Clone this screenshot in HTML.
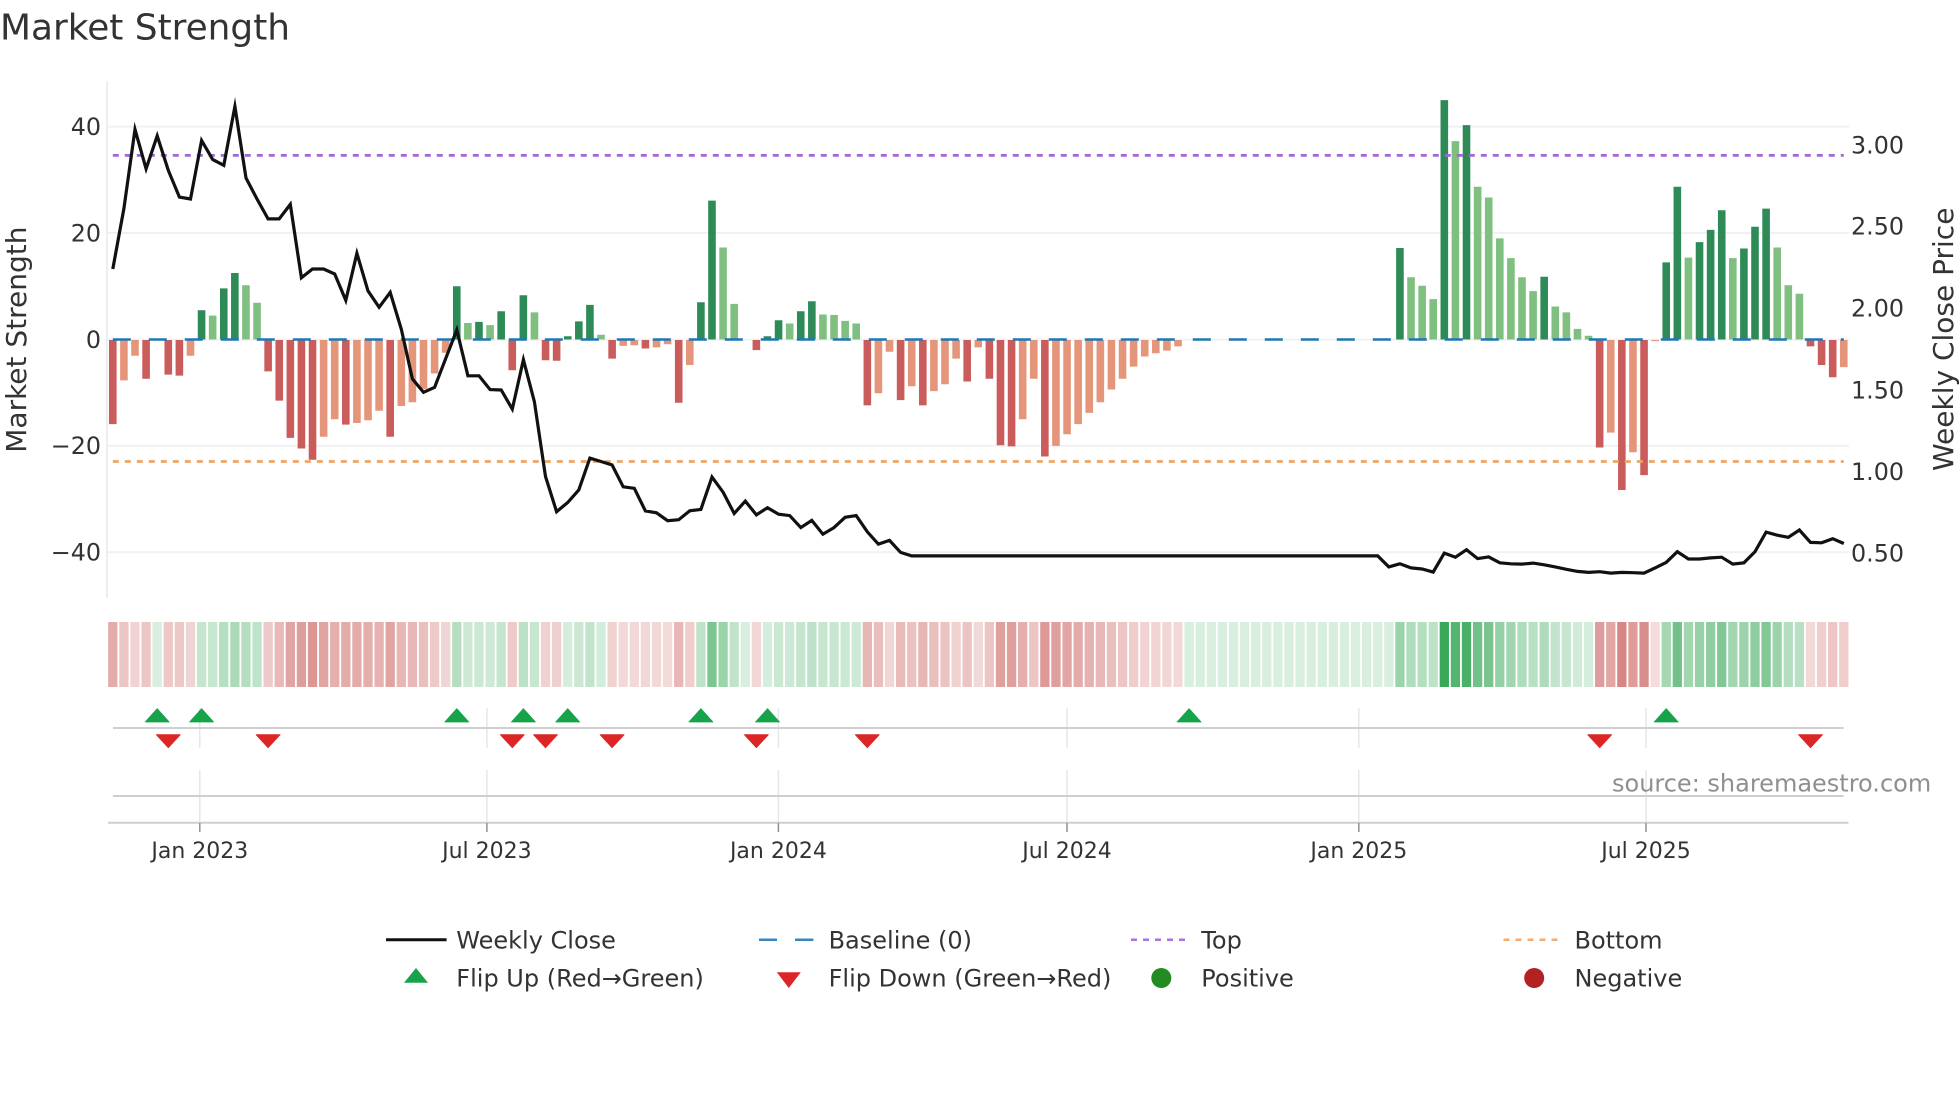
<!DOCTYPE html>
<html><head><meta charset="utf-8"><title>Market Strength</title>
<style>
html,body{margin:0;padding:0;background:#fff;width:1960px;height:1102px;overflow:hidden}
svg{display:block}
text{font-family:"DejaVu Sans","Liberation Sans",sans-serif;fill:#333}
.t{font-size:22px}
.a{font-size:23.8px}
.l{font-size:24px}
</style></head><body>
<svg id="s" xmlns="http://www.w3.org/2000/svg" width="1960" height="1102" viewBox="0 0 1960 1102">
<rect width="1960" height="1102" fill="#fff"/>
<g id="heat"></g>
<g stroke="#f0f1f5" stroke-width="2" fill="none">
<path d="M108 126.6H1849M108 233H1849M108 339.6H1849M108 445.8H1849M108 552.2H1849"/>
</g>
<path d="M107 81V598" stroke="#eeeeee" stroke-width="2"/>
<g stroke="#e6e6ea" stroke-width="1.5" fill="none">
<path d="M199.8 708V748M199.8 770V823M486.9 708V748M486.9 770V823M778.4 708V748M778.4 770V823M1067 708V748M1067 770V823M1358.8 708V748M1358.8 770V823M1646 708V748M1646 770V823"/>
</g>
<g id="bars"></g>
<path d="M112.8 339.5H1843.8" stroke="#1f77b4" stroke-width="2.6" stroke-dasharray="18 18" fill="none"/>
<path d="M112.8 155.4H1843.8" stroke="#a366d9" stroke-width="2.7" stroke-dasharray="6 6" fill="none"/>
<path d="M112.8 461.5H1843.8" stroke="#eea666" stroke-width="2.7" stroke-dasharray="6 6" fill="none"/>
<path id="price" d="" stroke="#111" stroke-width="3.2" fill="none" stroke-linejoin="miter" stroke-miterlimit="8"/>
<path d="M113 728H1843.6M113 796H1843.6M108 822.7H1848.5" stroke="#cfcfd2" stroke-width="2" fill="none"/>
<path d="M199.8 823V832M486.9 823V832M778.4 823V832M1067 823V832M1358.8 823V832M1646 823V832" stroke="#909090" stroke-width="1.5" fill="none"/>
<g id="mk"></g>

<text x="0" y="39.4" style="font-size:35.9px">Market Strength</text>
<g class="a" text-anchor="end">
<text x="101" y="135">40</text><text x="101" y="241.5">20</text><text x="101" y="348">0</text>
<text x="101" y="454">−20</text><text x="101" y="560.5">−40</text>
</g>
<g class="a">
<text x="1851" y="153.5">3.00</text><text x="1851" y="234.5">2.50</text><text x="1851" y="316.5">2.00</text>
<text x="1851" y="398.5">1.50</text><text x="1851" y="480">1.00</text><text x="1851" y="561.5">0.50</text>
</g>
<text transform="translate(26 339.6) rotate(-90)" text-anchor="middle" style="font-size:28px">Market Strength</text>
<text transform="translate(1953 339.3) rotate(-90)" text-anchor="middle" style="font-size:28px">Weekly Close Price</text>
<g class="t" text-anchor="middle">
<text x="199.8" y="858">Jan 2023</text><text x="486.9" y="858">Jul 2023</text><text x="778.4" y="858">Jan 2024</text>
<text x="1067" y="858">Jul 2024</text><text x="1358.8" y="858">Jan 2025</text><text x="1646" y="858">Jul 2025</text>
</g>
<text x="1612" y="791.7" style="font-size:24px;fill:#8f8f8f">source: sharemaestro.com</text>

<path d="M386 939.7H446.6" stroke="#111" stroke-width="3"/>
<path d="M759 939.7H777M795 939.7H813.4" stroke="#3a87bd" stroke-width="2.5"/>
<path d="M1131 939.7H1186" stroke="#a974de" stroke-width="2.5" stroke-dasharray="6 6"/>
<path d="M1503.5 939.7H1558" stroke="#f4ad70" stroke-width="2.5" stroke-dasharray="6 6"/>
<path d="M416 968L428 982.7H404Z" fill="#16a34a"/>
<path d="M776.8 972.3H800.8L788.8 988Z" fill="#dc2626"/>
<circle cx="1161.3" cy="978" r="10" fill="#228b22"/>
<circle cx="1534.2" cy="978" r="10" fill="#b22222"/>
<g class="l">
<text x="456.3" y="948.3">Weekly Close</text><text x="828.6" y="948.3">Baseline (0)</text>
<text x="1201.3" y="948.3">Top</text><text x="1574.5" y="948.3">Bottom</text>
<text x="456.3" y="986.7">Flip Up (Red→Green)</text><text x="828.6" y="986.7">Flip Down (Green→Red)</text>
<text x="1201.3" y="986.7">Positive</text><text x="1574.5" y="986.7">Negative</text>
</g>
</svg>
<script>
var V=[-15.8,-7.6,-2.95,-7.3,0,-6.5,-6.7,-2.95,5.5,4.5,9.6,12.5,10.2,6.9,-5.9,-11.4,-18.4,-20.4,-22.5,-18.2,-14.9,-15.9,-15.6,-15.1,-13.3,-18.2,-12.4,-11.7,-9.2,-6.3,-2.4,10,3.1,3.3,2.7,5.3,-5.7,8.3,5.1,-3.8,-3.9,.6,3.4,6.5,.9,-3.5,-1.1,-1,-1.6,-1.4,-.8,-11.8,-4.7,7,26.1,17.3,6.7,0,-1.9,.6,3.6,3,5.3,7.2,4.7,4.6,3.5,3,-12.3,-10,-2.2,-11.3,-8.7,-12.3,-9.6,-8.3,-3.5,-7.8,-1.4,-7.3,-19.8,-20,-14.9,-7.3,-21.9,-19.9,-17.7,-15.8,-13.7,-11.7,-9.3,-7.3,-5,-3.1,-2.5,-2,-1.2];
while(V.length<116)V.push(0);
V=V.concat([17.2,11.7,10.1,7.6,45,37.3,40.3,28.7,26.7,19,15.3,11.7,9.1,11.8,6.2,5.1,2,.7,-20.2,-17.4,-28.2,-21.1,-25.4,-.2,14.5,28.7,15.4,18.3,20.6,24.3,15.3,17.1,21.2,24.6,17.3,10.2,8.6,-1.2,-4.7,-7,-5.1]);
var DK={8:1,10:1,11:1,31:1,33:1,35:1,37:1,41:1,42:1,43:1,53:1,54:1,59:1,60:1,62:1,63:1,116:1,120:1,122:1,129:1,140:1,141:1,143:1,144:1,145:1,147:1,148:1,149:1,
0:1,3:1,5:1,6:1,14:1,15:1,16:1,17:1,18:1,21:1,25:1,36:1,39:1,40:1,45:1,48:1,51:1,58:1,68:1,71:1,73:1,77:1,79:1,80:1,81:1,84:1,134:1,136:1,138:1,153:1,154:1,155:1};
var X0=112.8,S=11.096,Y0=339.5,U=5.32,W=7.6;
var P={gd:'',gl:'',rd:'',rl:''},heat='';
V.forEach(function(v,i){
  var x=X0+S*i,a=.2+.8*Math.abs(v)/45,c;
  c=v>=0?[58,168,90]:[197,82,79];
  var col='rgb('+c.map(function(k){return Math.round(255-a*(255-k))}).join(',')+')';
  var hx=x-4.65;
  heat+='<rect x="'+hx.toFixed(2)+'" y="622" width="9.3" height="65" fill="'+col+'"/>';
  if(v==0)return;
  var k=(v>0?'g':'r')+(DK[i]?'d':'l'),h=Math.abs(v)*U;
  var y=v>0?Y0-h:Y0+.5;
  P[k]+='M'+(x-W/2).toFixed(2)+' '+y.toFixed(1)+'h'+W+'v'+h.toFixed(1)+'h-'+W+'z';
});
document.getElementById('heat').innerHTML=heat;
var C={gd:'#2e8b57',gl:'#7fbf7f',rd:'#cb5c5c',rl:'#e5967a'},b='';
for(var k in P)b+='<path d="'+P[k]+'" fill="'+C[k]+'"/>';
document.getElementById('bars').innerHTML=b;
var A=[703,545,338,441,355,445,515,520,367,417,432,278,465,520,572,572,534,726,703,703,716,785,662,760,803,764,860,990,1025,1012,937,862,982,982,1018,1019,1069,940,1050,1245,1337,1313,1280,1197,1206,1215,1272,1276,1335,1340];
var B=[1338,1335,1309,1305,1211,1255,1317,1281,1321,1300,1319,1323,1358,1337,1377,1358,1328,1323,1370,1406,1395,1430,1440];
var D=[1472,1463,1475,1478,1487,1432,1444,1422,1448,1443,1460,1463,1464,1461,1466,1472,1479,1485,1488,1486,1490,1488,1489,1490,1475,1459,1428,1449,1449,1446,1444,1464,1460,1428,1371,1380,1386,1365,1401,1402,1390,1404];
var Y=A.map(function(z){return z/2.613});
B.forEach(function(z){Y.push(60+z/2.904)});
while(Y.length<115)Y.push(60+1440/2.904);
D.forEach(function(z){Y.push(60+z/2.904)});
document.getElementById('price').setAttribute('d','M'+Y.map(function(y,i){return (X0+S*i).toFixed(1)+' '+y.toFixed(1)}).join('L'));
var m='';
[4,8,31,37,41,53,59,97,140].forEach(function(i){var x=X0+S*i;
  m+='<path d="M'+x.toFixed(1)+' 708.7L'+(x+12).toFixed(1)+' 722H'+(x-12).toFixed(1)+'Z" fill="#16a34a" stroke="#16a34a" stroke-width=".8" stroke-linejoin="round"/>'});
[5,14,36,39,45,58,68,134,153].forEach(function(i){var x=X0+S*i;
  m+='<path d="M'+(x-12).toFixed(1)+' 734.7H'+(x+12).toFixed(1)+'L'+x.toFixed(1)+' 747.7Z" fill="#dc2626" stroke="#dc2626" stroke-width=".8" stroke-linejoin="round"/>'});
document.getElementById('mk').innerHTML=m;
</script>
</body></html>
